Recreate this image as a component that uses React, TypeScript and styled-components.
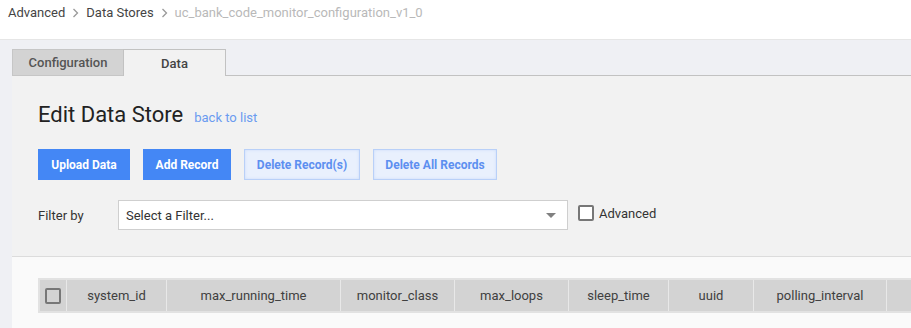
import React from 'react';
import styled, { createGlobalStyle } from 'styled-components';

const GlobalStyle = createGlobalStyle`
  html, body {
    margin: 0;
    padding: 0;
    background: #eff0f4;
    font-family: Roboto, "Liberation Sans", Arial, sans-serif;
    overflow: hidden;
  }
`;

const Header = styled.div`
  height: 40px;
  box-sizing: border-box;
  background: #fff;
  border-bottom: 1px solid #e6e6e6;
  padding: 4px 8px 0;
`;

const Crumbs = styled.div`
  display: flex;
  align-items: center;
  height: 18px;
`;

const Crumb = styled.span<{ $current?: boolean }>`
  font-size: 13px;
  line-height: 18px;
  color: ${p => (p.$current ? '#b9b9b9' : '#444')};
`;

const Chevron = styled.svg`
  width: 7px;
  height: 10px;
  margin: 0 7px 0 7px;
`;

const Main = styled.div`
  padding: 9px 0 0 12px;
  overflow: hidden;
`;

const TabRow = styled.div`
  display: flex;
  height: 27px;
`;

const Tab = styled.div<{ $active?: boolean; $w: number }>`
  width: ${p => p.$w}px;
  box-sizing: border-box;
  display: flex;
  align-items: center;
  justify-content: center;
  font-size: 13px;
  font-weight: 500;
  color: ${p => (p.$active ? '#444' : '#555')};
  background: ${p => (p.$active ? '#f2f2f2' : '#d3d3d3')};
  border: 1px solid ${p => (p.$active ? '#c2c2c2' : '#c6c6c6')};
  border-bottom: ${p => (p.$active ? 'none' : '1px solid #c6c6c6')};
  border-right: ${p => (p.$active ? '1px solid #c2c2c2' : 'none')};
`;

const TabFill = styled.div`
  flex: 1;
  border-bottom: 1px solid #c2c2c2;
`;

const Body = styled.div`
  background: #f2f2f2;
  padding: 24px 0 26px 26px;
  border-bottom: 1px solid #dcdcdc;
`;

const TitleRow = styled.div`
  display: flex;
  align-items: baseline;
  gap: 11px;
`;

const Title = styled.h1`
  margin: 0;
  font-size: 22px;
  font-weight: 400;
  color: #222;
  line-height: 30px;
`;

const BackLink = styled.a`
  font-size: 13px;
  color: #6a9bf0;
  text-decoration: none;
`;

const Buttons = styled.div`
  display: flex;
  gap: 13px;
  margin-top: 19px;
`;

const Button = styled.button<{ $light?: boolean; $w: number }>`
  width: ${p => p.$w}px;
  height: 31px;
  box-sizing: border-box;
  font-family: inherit;
  font-size: 12px;
  font-weight: 700;
  border-radius: 0;
  padding: 0;
  cursor: pointer;
  color: ${p => (p.$light ? '#5d8ff0' : '#fff')};
  background: ${p => (p.$light ? '#e9f0fd' : '#4487f5')};
  border: 1px solid ${p => (p.$light ? '#b9d0f8' : '#4487f5')};
  box-shadow: ${p => (p.$light ? 'inset 0 0 3px #c8dafa' : 'none')};
`;

const FilterRow = styled.div`
  display: flex;
  align-items: center;
  margin-top: 20px;
`;

const Label = styled.span`
  width: 80px;
  font-size: 13px;
  color: #333;
`;

const Select = styled.div`
  width: 450px;
  height: 30px;
  box-sizing: border-box;
  background: #fff;
  border: 1px solid #cfcfcf;
  display: flex;
  align-items: center;
  justify-content: space-between;
  padding: 0 11px 0 7px;
  font-size: 13px;
  color: #333;
`;

const Caret = styled.span`
  width: 0;
  height: 0;
  border-left: 5px solid transparent;
  border-right: 5px solid transparent;
  border-top: 5px solid #808080;
`;

const CheckLabel = styled.label`
  display: flex;
  align-items: center;
  gap: 5px;
  margin: 0 0 4px 10px;
  font-size: 13px;
  color: #333;
`;

const Box = styled.span<{ $bare?: boolean }>`
  width: 16px;
  height: 16px;
  box-sizing: border-box;
  border: 2px solid #777;
  border-radius: 2px;
  background: ${p => (p.$bare ? 'transparent' : '#fff')};
`;

const Grid = styled.div`
  background: #fafafa;
  padding: 21px 0 0 26px;
  height: 60px;
  overflow: hidden;
`;

const HeadRow = styled.div`
  display: flex;
  background: #d3d3d3;
  border: 2px solid #e2e2e2;
  border-right: none;
  height: 35px;
  box-sizing: border-box;
`;

const HeadCell = styled.div<{ $w: number }>`
  width: ${p => p.$w}px;
  flex: none;
  box-sizing: border-box;
  display: flex;
  align-items: center;
  justify-content: center;
  font-size: 13px;
  color: #404040;
  border-right: 1px solid #e8e8e8;
`;

const columns = [
  { name: 'system_id', w: 100 },
  { name: 'max_running_time', w: 174 },
  { name: 'monitor_class', w: 114 },
  { name: 'max_loops', w: 114 },
  { name: 'sleep_time', w: 100 },
  { name: 'uuid', w: 85 },
  { name: 'polling_interval', w: 133 },
  { name: '', w: 100 },
];

const buttons = [
  { label: 'Upload Data', w: 92 },
  { label: 'Add Record', w: 88 },
  { label: 'Delete Record(s)', w: 116, light: true },
  { label: 'Delete All Records', w: 124, light: true },
];

const ChevronIcon = () => (
  <Chevron viewBox="0 0 7 10">
    <path d="M1.5 1 L5.5 5 L1.5 9" fill="none" stroke="#999" strokeWidth="1.3" />
  </Chevron>
);

export default function App() {
  return (
    <>
      <GlobalStyle />
      <Header>
        <Crumbs>
          <Crumb>Advanced</Crumb>
          <ChevronIcon />
          <Crumb>Data Stores</Crumb>
          <ChevronIcon />
          <Crumb $current>uc_bank_code_monitor_configuration_v1_0</Crumb>
        </Crumbs>
      </Header>
      <Main>
        <TabRow>
          <Tab $w={111}>Configuration</Tab>
          <Tab $w={103} $active>Data</Tab>
          <TabFill />
        </TabRow>
        <Body>
          <TitleRow>
            <Title>Edit Data Store</Title>
            <BackLink href="#">back to list</BackLink>
          </TitleRow>
          <Buttons>
            {buttons.map(b => (
              <Button key={b.label} $w={b.w} $light={b.light}>
                {b.label}
              </Button>
            ))}
          </Buttons>
          <FilterRow>
            <Label>Filter by</Label>
            <Select>
              <span>Select a Filter...</span>
              <Caret />
            </Select>
            <CheckLabel>
              <Box />
              Advanced
            </CheckLabel>
          </FilterRow>
        </Body>
        <Grid>
          <HeadRow>
            <HeadCell $w={27}>
              <Box $bare />
            </HeadCell>
            {columns.map((c, i) => (
              <HeadCell key={i} $w={c.w}>
                {c.name}
              </HeadCell>
            ))}
          </HeadRow>
        </Grid>
      </Main>
    </>
  );
}
